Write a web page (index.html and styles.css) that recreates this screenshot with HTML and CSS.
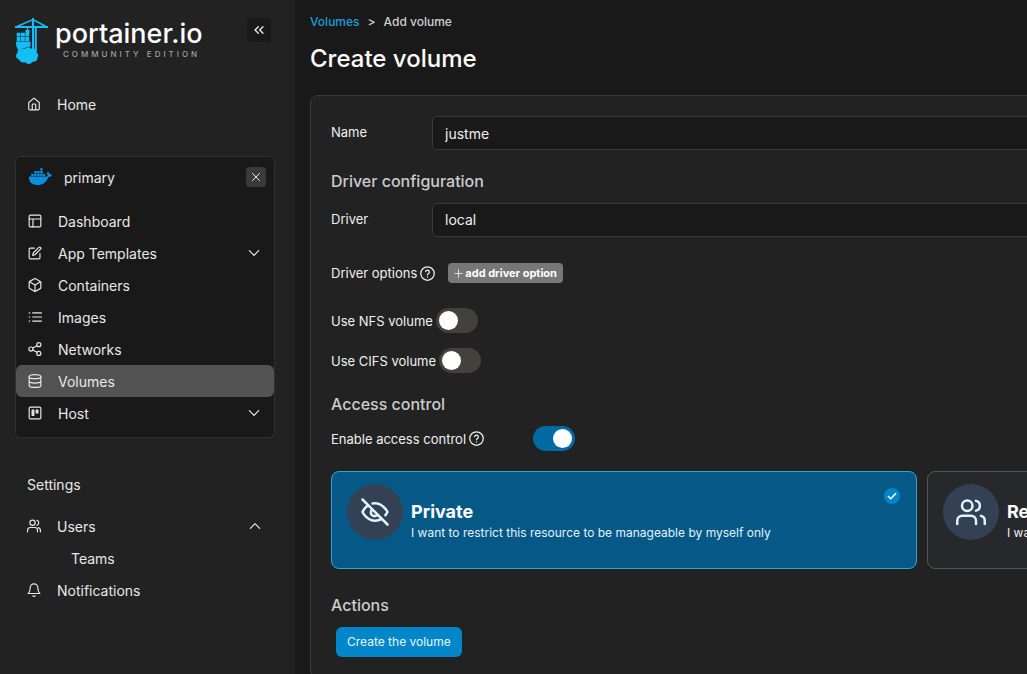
FILE: index.html
```html
<!DOCTYPE html>
<html lang="en">
<head>
<meta charset="utf-8">
<title>Create volume</title>
<link rel="stylesheet" href="styles.css">
</head>
<body>
<aside class="sidebar">
  <header class="brand">
    <svg class="brand-mark" viewBox="0 0 33 46" aria-hidden="true">
      <g fill="none" stroke="#13bef9">
        <path d="M0 9h33" stroke-width="2"/>
        <path d="M2 8.500 18 1.500 31 8.500" stroke-width="1.500"/>
        <path d="M18 0v31M20.800 9v24" stroke-width="2"/>
        <path d="M12.500 9v6" stroke-width="1.200"/>
      </g>
      <g fill="#13bef9">
        <path d="M10.500 12h4v3.300h-4zM1.700 14.700h3.800v3.800H1.700zM6 14.700h3.800v3.800H6zM10.300 14.700h4v3.800h-4zM1.700 19h3.800v3.900H1.700zM6 19h3.800v3.900H6zM10.300 19h4v3.900h-4z"/>
        <path d="M1 23.500h14.500v5.500c-2.500-.8-5.200.2-6 1.700-2.200-.5-4.600.2-5.500 1.800-2-1.500-3-4-3-9z"/>
        <path d="M10 31.200c1.400-2.600 5-2.500 6.300-.4 2.700-.8 5.400.7 5.400 3.600 2 2 1.700 4.200.6 5.500.3 3-2.500 4.500-4.800 3.800-1.700 2.800-5.500 3-7 .5-3 1.200-6-.3-6.300-2.600-3.600-1-4-5-1.600-6.500-1.200-3.300 3.500-6 7.400-3.900z"/>
      </g>
    </svg>
    <div class="brand-text">
      <div class="brand-name">portainer.io</div>
      <div class="brand-edition">COMMUNITY EDITION</div>
    </div>
    <button class="collapse" type="button" aria-label="Collapse sidebar">
      <svg class="icon-s" viewBox="0 0 24 24"><path d="m11 17-5-5 5-5M18 17l-5-5 5-5"/></svg>
    </button>
  </header>

  <nav class="nav">
    <a class="item" href="#"><svg class="icon" viewBox="0 0 24 24"><path d="M3 9.500 12 2l9 7.500V20a2 2 0 0 1-2 2H5a2 2 0 0 1-2-2zM9 22V13.500a1.500 1.500 0 0 1 1.500-1.500h3a1.500 1.500 0 0 1 1.500 1.500V22"/></svg><span>Home</span></a>

    <section class="environment">
      <div class="env-head">
        <svg class="whale" viewBox="0 0 24 18" aria-hidden="true"><path fill="#0c8fdc" d="M1 8.500h16.800c1 0 1.600-.3 2-.6-.9-1.400-.8-3 0-4.300 1 .6 1.500 1.500 1.600 2.500 1 0 1.900.2 2.600.6-.6 1.500-1.900 2.200-3.600 2.200C18.500 14 15 17 9.500 17 3.800 17 .7 14 1 8.500zM3.200 5.700h2.500v2.200H3.200zM6.200 5.700h2.500v2.200H6.200zM9.200 5.700h2.500v2.200H9.200zM12.200 5.700h2.500v2.200h-2.500zM15.200 5.700h2v2.200h-2zM6.200 3h2.500v2.200H6.200zM9.200 3h2.500v2.200H9.200zM12.200 3h2.500v2.200h-2.500zM12.200.3h2.500v2.200h-2.500z"/></svg>
        <span class="env-name">primary</span>
        <button class="close" type="button" aria-label="Disconnect"><svg class="icon-s" viewBox="0 0 24 24"><path d="m5 5 14 14M19 5 5 19"/></svg></button>
      </div>
      <a class="item" href="#"><svg class="icon" viewBox="0 0 24 24"><rect x="2" y="2" width="20" height="20" rx="2"/><path d="M2 8.500h20M8.500 22V8.500"/></svg><span>Dashboard</span></a>
      <a class="item" href="#"><svg class="icon" viewBox="0 0 24 24"><path d="M11 3.500H4a2 2 0 0 0-2 2V20a2 2 0 0 0 2 2h14.500a2 2 0 0 0 2-2v-7M18.500 2.500a2.100 2.100 0 0 1 3 3L12 15l-4 1 1-4z"/></svg><span>App Templates</span><svg class="icon chevron" viewBox="0 0 24 24"><path d="m4 8 8 8 8-8"/></svg></a>
      <a class="item" href="#"><svg class="icon" viewBox="0 0 24 24"><path d="M22 16.500v-9a2 2 0 0 0-1-1.700l-8-4.500a2 2 0 0 0-2 0L3 5.800a2 2 0 0 0-1 1.700v9a2 2 0 0 0 1 1.700l8 4.500a2 2 0 0 0 2 0l8-4.500a2 2 0 0 0 1-1.700zM2.500 6.500 12 12l9.500-5.500M12 23V12"/></svg><span>Containers</span></a>
      <a class="item" href="#"><svg class="icon" viewBox="0 0 24 24"><path d="M8 5h15M8 12h15M8 19h15M2 5h1M2 12h1M2 19h1"/></svg><span>Images</span></a>
      <a class="item" href="#"><svg class="icon" viewBox="0 0 24 24"><circle cx="18.500" cy="4.500" r="3.500"/><circle cx="5" cy="12" r="3.500"/><circle cx="18.500" cy="19.500" r="3.500"/><path d="m8.200 13.700 7.300 4M15.500 6.300l-7.300 4"/></svg><span>Networks</span></a>
      <a class="item active" href="#" aria-current="page"><svg class="icon" viewBox="0 0 24 24"><ellipse cx="12" cy="4.500" rx="10" ry="3.500"/><path d="M22 12c0 2-4.500 3.500-10 3.500S2 14 2 12M2 4.500v15C2 21.500 6.500 23 12 23s10-1.500 10-3.500v-15"/></svg><span>Volumes</span></a>
      <a class="item" href="#"><svg class="icon" viewBox="0 0 24 24"><rect x="2" y="2" width="20" height="20" rx="2"/><path fill="currentColor" d="M7 7h3v9H7zM14 7h3v5h-3z"/></svg><span>Host</span><svg class="icon chevron" viewBox="0 0 24 24"><path d="m4 8 8 8 8-8"/></svg></a>
    </section>

    <h2 class="group">Settings</h2>
    <a class="item" href="#"><svg class="icon" viewBox="0 0 24 24"><circle cx="9.500" cy="6.500" r="4.500"/><path d="M1 22v-3a4.500 4.500 0 0 1 4.500-4.500h8A4.500 4.500 0 0 1 18 19v3M17 2.200a4.500 4.500 0 0 1 0 8.600M19.500 14.800A4.500 4.500 0 0 1 23 19v3"/></svg><span>Users</span><svg class="icon chevron" viewBox="0 0 24 24"><path d="m4 16 8-8 8 8"/></svg></a>
    <a class="item child" href="#"><span>Teams</span></a>
    <a class="item" href="#"><svg class="icon" viewBox="0 0 24 24"><path d="M18.500 8a6.500 6.500 0 0 0-13 0c0 7-3.500 10-3.500 10h20s-3.500-3-3.500-10M14 22a2.300 2.300 0 0 1-4 0"/></svg><span>Notifications</span></a>
  </nav>
</aside>

<main class="main">
  <nav class="crumbs" aria-label="Breadcrumb"><a href="#">Volumes</a><span>&gt;</span><span>Add volume</span></nav>
  <h1 class="title">Create volume</h1>

  <form class="panel">
    <div class="row">
      <label class="label" for="name">Name</label>
      <input class="field" id="name" type="text" value="justme">
    </div>

    <h2 class="section">Driver configuration</h2>
    <div class="row">
      <label class="label" for="driver">Driver</label>
      <select class="field" id="driver"><option>local</option></select>
    </div>
    <div class="row options-row">
      <span class="text-label">Driver options</span>
      <svg class="help" viewBox="0 0 24 24"><circle cx="12" cy="12" r="10.800"/><path d="M9 9a3 3 0 0 1 5.900 1c0 2-2.900 2.500-2.900 4M12 17.500v.2"/></svg>
      <button class="add" type="button"><svg class="plus" viewBox="0 0 24 24"><path d="M12 2v20M2 12h20"/></svg>add driver option</button>
    </div>
    <div class="row nfs-row">
      <label class="text-label" for="nfs">Use NFS volume</label>
      <input class="switch" id="nfs" type="checkbox">
    </div>
    <div class="row cifs-row">
      <label class="text-label" for="cifs">Use CIFS volume</label>
      <input class="switch" id="cifs" type="checkbox">
    </div>

    <h2 class="section">Access control</h2>
    <div class="row">
      <div class="label-wide">
        <label class="text-label" for="access">Enable access control</label>
        <svg class="help" viewBox="0 0 24 24"><circle cx="12" cy="12" r="10.800"/><path d="M9 9a3 3 0 0 1 5.900 1c0 2-2.900 2.500-2.900 4M12 17.500v.2"/></svg>
      </div>
      <input class="switch" id="access" type="checkbox" checked>
    </div>

    <div class="cards">
      <label class="card selected">
        <input class="card-radio" type="radio" name="ownership" checked>
        <span class="avatar"><svg viewBox="0 0 24 24"><path d="M10 5.200A10 10 0 0 1 12 5c6.500 0 10 7 10 7a13 13 0 0 1-1.700 2.600M6.600 6.600C3.600 8.500 2 12 2 12s3.500 7 10 7a9.700 9.700 0 0 0 5.400-1.600M9.900 9.900a3 3 0 1 0 4.200 4.200M2 2l20 20"/></svg></span>
        <span class="card-text"><strong>Private</strong><span>I want to restrict this resource to be manageable by myself only</span></span>
        <svg class="tick" viewBox="0 0 16 16" aria-hidden="true"><circle cx="8" cy="8" r="8" fill="#0086c9"/><path d="m4 8 2.700 2.700L12 5.300" fill="none" stroke="#fff" stroke-width="1.600"/></svg>
      </label>
      <label class="card">
        <input class="card-radio" type="radio" name="ownership">
        <span class="avatar"><svg viewBox="0 0 24 24"><path d="M16 21.500v-2.500a4 4 0 0 0-4-4H5a4 4 0 0 0-4 4v2.500M23 21.500v-2.500a4 4 0 0 0-3-3.900M16 3.100a4 4 0 0 1 0 7.800"/><circle cx="9" cy="7" r="4.200"/></svg></span>
        <span class="card-text"><strong>Restricted</strong><span>I want to restrict the management of this resource to a set of users and/or teams</span></span>
      </label>
    </div>

    <h2 class="section actions">Actions</h2>
    <button class="submit" type="submit">Create the volume</button>
  </form>
</main>
</body>
</html>
```

FILE: styles.css
```css
* { box-sizing: border-box; }

body {
  display: flex;
  min-height: 100vh;
  margin: 0;
  overflow: hidden;
  background: #191919;
  color: #f0f0f0;
  font: 500 12px/20px Inter, "Liberation Sans", sans-serif;
}

a { color: inherit; text-decoration: none; }
button, input, select { margin: 0; font: inherit; color: inherit; }
h1, h2 { margin: 0; }
svg { flex: none; }

.icon, .icon-s, .help, .plus, .avatar svg {
  fill: none;
  stroke: currentColor;
  stroke-width: 2;
  stroke-linecap: round;
  stroke-linejoin: round;
}
.icon { width: 14px; height: 14px; }
.icon-s { width: 12px; height: 12px; }

/* Sidebar */
.sidebar {
  flex: none;
  width: 295px;
  padding: 0 20px 0 15px;
  background: #222;
  color: #e8e8e8;
  font-size: 14px;
  font-weight: 400;
}
.brand {
  display: flex;
  align-items: flex-start;
  height: 88px;
  padding: 18px 4px 0 0;
}
.brand-mark { width: 33px; height: 46px; }
.brand-text { margin-left: 7px; padding-top: 1px; }
.brand-name {
  color: #fff;
  font-size: 27px;
  font-weight: 500;
  line-height: 30px;
}
.brand-edition {
  padding-left: 8px;
  color: #a0a0a0;
  font-size: 8px;
  font-weight: 500;
  line-height: 10px;
  letter-spacing: 3px;
  white-space: nowrap;
}
.collapse, .close {
  display: grid;
  place-items: center;
  margin-left: auto;
  padding: 0;
  border: 0;
  border-radius: 4px;
}
.collapse { width: 24px; height: 24px; background: #191919; }
.collapse .icon-s { width: 16px; height: 16px; }
.close { width: 20px; height: 20px; background: #3a3a3a; }

.item {
  display: flex;
  align-items: center;
  gap: 16px;
  height: 32px;
  padding: 0 13px 0 12px;
  border-radius: 6px;
}
.item span, .env-name { padding-top: 2px; }
.child { padding-left: 56px; }
.active { background: #525252; }
.chevron { margin-left: auto; }

.environment {
  margin: 36px 0 31px;
  padding-bottom: 8px;
  border: 1px dotted #484848;
  border-radius: 6px;
  background: #191919;
}
.env-head {
  display: flex;
  align-items: center;
  height: 40px;
  margin-bottom: 8px;
  padding: 0 8px 0 12px;
}
.whale { width: 24px; height: 18px; }
.env-name { margin-left: 12px; }
.group {
  margin-bottom: 9px;
  padding-left: 12px;
  font-size: 14px;
  font-weight: 400;
  line-height: 32px;
}

/* Main column */
.main {
  flex: 1;
  min-width: 0;
  padding: 12px 15px 0;
  overflow: hidden;
}
.crumbs { display: flex; gap: 8px; color: #d0d0d0; }
.crumbs a { color: #1a9fd9; }
.title {
  margin: 10px 0 20px;
  color: #fff;
  font-size: 24px;
  font-weight: 500;
  line-height: 33px;
}
.panel {
  min-width: 1224px;
  padding: 20px;
  border: 1px solid #3a3a3a;
  border-radius: 8px;
  background: #222;
}
.row { display: flex; align-items: center; }
.label { flex: none; width: 101px; padding-bottom: 2px; }
.label, .text-label { font-size: 13px; font-weight: 400; }
.label-wide { display: flex; align-items: center; gap: 3px; width: 202px; }
.field {
  flex: 1;
  height: 34px;
  padding: 0 12px;
  appearance: none;
  border: 1px solid #3a3a3a;
  border-radius: 5px;
  background: #191919;
  font-size: 14px;
  font-weight: 400;
}
.section {
  margin: 19px 0 10px;
  color: #ccc;
  font-size: 16px;
  font-weight: 500;
  line-height: 24px;
}
.help { width: 15px; height: 15px; }
.options-row { gap: 3px; margin-top: 26px; }
.add {
  display: flex;
  align-items: center;
  gap: 2px;
  height: 20px;
  margin-left: 10px;
  padding: 0 6px;
  border: 0;
  border-radius: 4px;
  background: #777;
  color: #fff;
  font-size: 11px;
  font-weight: 700;
}
.plus { width: 9px; height: 9px; }
.nfs-row { gap: 3px; margin-top: 25px; }
.cifs-row { gap: 3px; margin-top: 15px; }

.switch {
  flex: none;
  width: 42px;
  height: 25px;
  padding: 3px;
  appearance: none;
  border-radius: 13px;
  background: #44403c;
}
.switch::before {
  display: block;
  width: 19px;
  height: 19px;
  border-radius: 50%;
  background: #fff;
  content: "";
}
.switch:checked { background: #026aa2; }
.switch:checked::before { margin-left: auto; }

.cards {
  display: grid;
  grid-template-columns: 1fr 1fr;
  gap: 10px;
  margin-top: 20px;
}
.card {
  position: relative;
  display: flex;
  gap: 8px;
  min-height: 98px;
  padding: 12px 15px;
  border: 1px solid #555;
  border-radius: 8px;
  background: #27282b;
  font-weight: 400;
}
.selected { border-color: #36a3d3; background: #065986; color: #e0f2fe; }
.card-radio { position: absolute; opacity: 0; }
.avatar {
  display: grid;
  flex: none;
  place-items: center;
  width: 56px;
  height: 56px;
  border-radius: 50%;
  background: #344054;
  color: #e0f2fe;
}
.avatar svg { width: 30px; height: 30px; }
.card-text { display: flex; flex-direction: column; padding-top: 17px; }
.card-text strong { color: #fff; font-size: 18px; font-weight: 700; line-height: 22px; }
.tick { position: absolute; top: 16px; right: 16px; width: 16px; height: 16px; }

.actions { margin-top: 24px; }
.submit {
  height: 30px;
  margin-left: 5px;
  padding: 0 11px;
  border: 0;
  border-radius: 6px;
  background: #0086c9;
  color: #e8f6fe;
  font-weight: 400;
}
```
